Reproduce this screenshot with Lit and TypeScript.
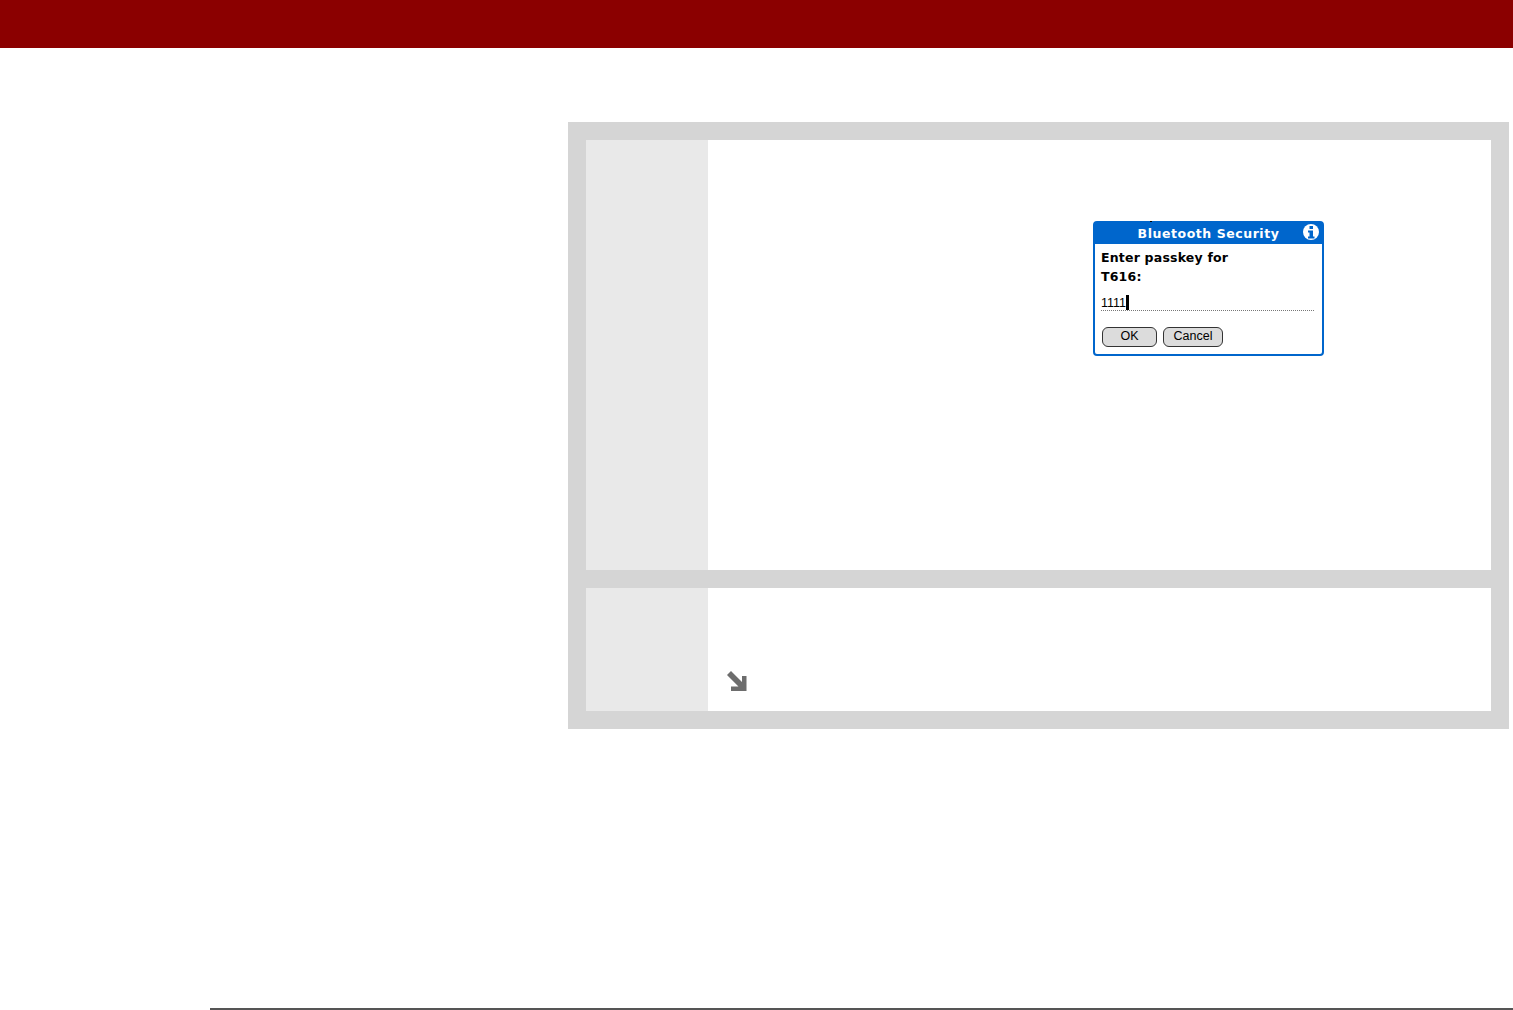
import { LitElement, html, css } from "lit";
import { customElement } from "lit/decorators.js";

@customElement("app-root")
export class AppRoot extends LitElement {
  static styles = css`
    :host { display: block; width: 1513px; height: 1010px; background: #fff; overflow: hidden; font-family: "Liberation Sans", sans-serif; }
    .page { display: flex; flex-direction: column; height: 1010px; }
    .bar { height: 48px; background: #8b0000; flex: none; }
    .main { flex: 1; padding: 74px 4px 0 568px; }
    .panel { background: #d5d5d5; padding: 18px; display: flex; flex-direction: column; gap: 18px; height: 607px; box-sizing: border-box; }
    .row { display: flex; background: #fff; }
    .row.one { height: 430px; }
    .row.two { height: 123px; }
    .num { width: 122px; flex: none; background: #e9e9e9; }
    .body { flex: 1; display: flex; flex-direction: column; }
    .one .body { align-items: flex-start; padding: 81px 0 0 385px; }
    .two .body { justify-content: flex-end; padding: 0 0 18px 17px; }
    .arrow { display: block; width: 26px; height: 24px; }
    .foot { height: 2px; margin-left: 210px; background: #555; flex: none; }

    .dialog { width: 231px; height: 135px; box-sizing: border-box; border: 2px solid #0066cc; border-radius: 4px; background: #fff; font-family: "DejaVu Sans", sans-serif; color: #000; display: flex; flex-direction: column; position: relative; }
    .tick { position: absolute; left: 55px; top: -2px; width: 2px; height: 1px; background: #000; }
    .title { height: 21px; background: #0066cc; color: #fff; font-weight: 700; font-size: 12.5px; letter-spacing: 0.55px; display: flex; align-items: center; justify-content: center; position: relative; line-height: 21px; flex: none; }
    .info { position: absolute; right: 3px; top: 1px; width: 16px; height: 16px; display: block; }
    .content { flex: 1; padding: 4px 7px 0 6px; display: flex; flex-direction: column; }
    .label { font-weight: 700; font-size: 12.5px; line-height: 19px; letter-spacing: 0.2px; white-space: pre-line; }
    .field { margin-top: 7px; height: 17px; display: flex; align-items: flex-end; font-family: "Liberation Sans", sans-serif; font-size: 12.5px; line-height: 13px; border-bottom: 1px dotted #777; margin-right: 1px; }
    .caret { width: 3px; height: 15px; background: #000; }
    .btns { display: flex; gap: 6px; margin: 16px 0 0 1px; }
    .btn { height: 20px; box-sizing: border-box; border: 1px solid #333; border-radius: 6px; background: #dcdcdc; font-family: "Liberation Sans", sans-serif; font-size: 12.5px; line-height: 17px; text-align: center; }
    .ok { width: 55px; }
    .cancel { width: 60px; }
  `;

  render() {
    return html`
      <div class="page">
        <div class="bar"></div>
        <div class="main">
          <div class="panel">
            <div class="row one">
              <div class="num"></div>
              <div class="body">
                <div class="dialog">
                  <div class="tick"></div>
                  <div class="title">Bluetooth Security
                    <svg class="info" viewBox="0 0 16 16"><circle cx="8" cy="8" r="8" fill="#fff"/><rect x="6.5" y="2" width="3.5" height="3" fill="#0066cc"/><path d="M5 6.5h5v6h1.5v2h-6.5v-2h1.5v-4H5z" fill="#0066cc"/></svg>
                  </div>
                  <div class="content">
                    <div class="label">Enter passkey for
T616:</div>
                    <div class="field"><span>1111</span><span class="caret"></span></div>
                    <div class="btns"><div class="btn ok">OK</div><div class="btn cancel">Cancel</div></div>
                  </div>
                </div>
              </div>
            </div>
            <div class="row two">
              <div class="num"></div>
              <div class="body">
                <svg class="arrow" viewBox="0 0 26 24"><path d="M2 6 L6 2 L17 13 L17 7 L21.5 7 L21.5 22 L6 22 L6 17.5 L13.5 17.5 Z" fill="#6d6d6d"/></svg>
              </div>
            </div>
          </div>
        </div>
        <div class="foot"></div>
      </div>
    `;
  }
}
